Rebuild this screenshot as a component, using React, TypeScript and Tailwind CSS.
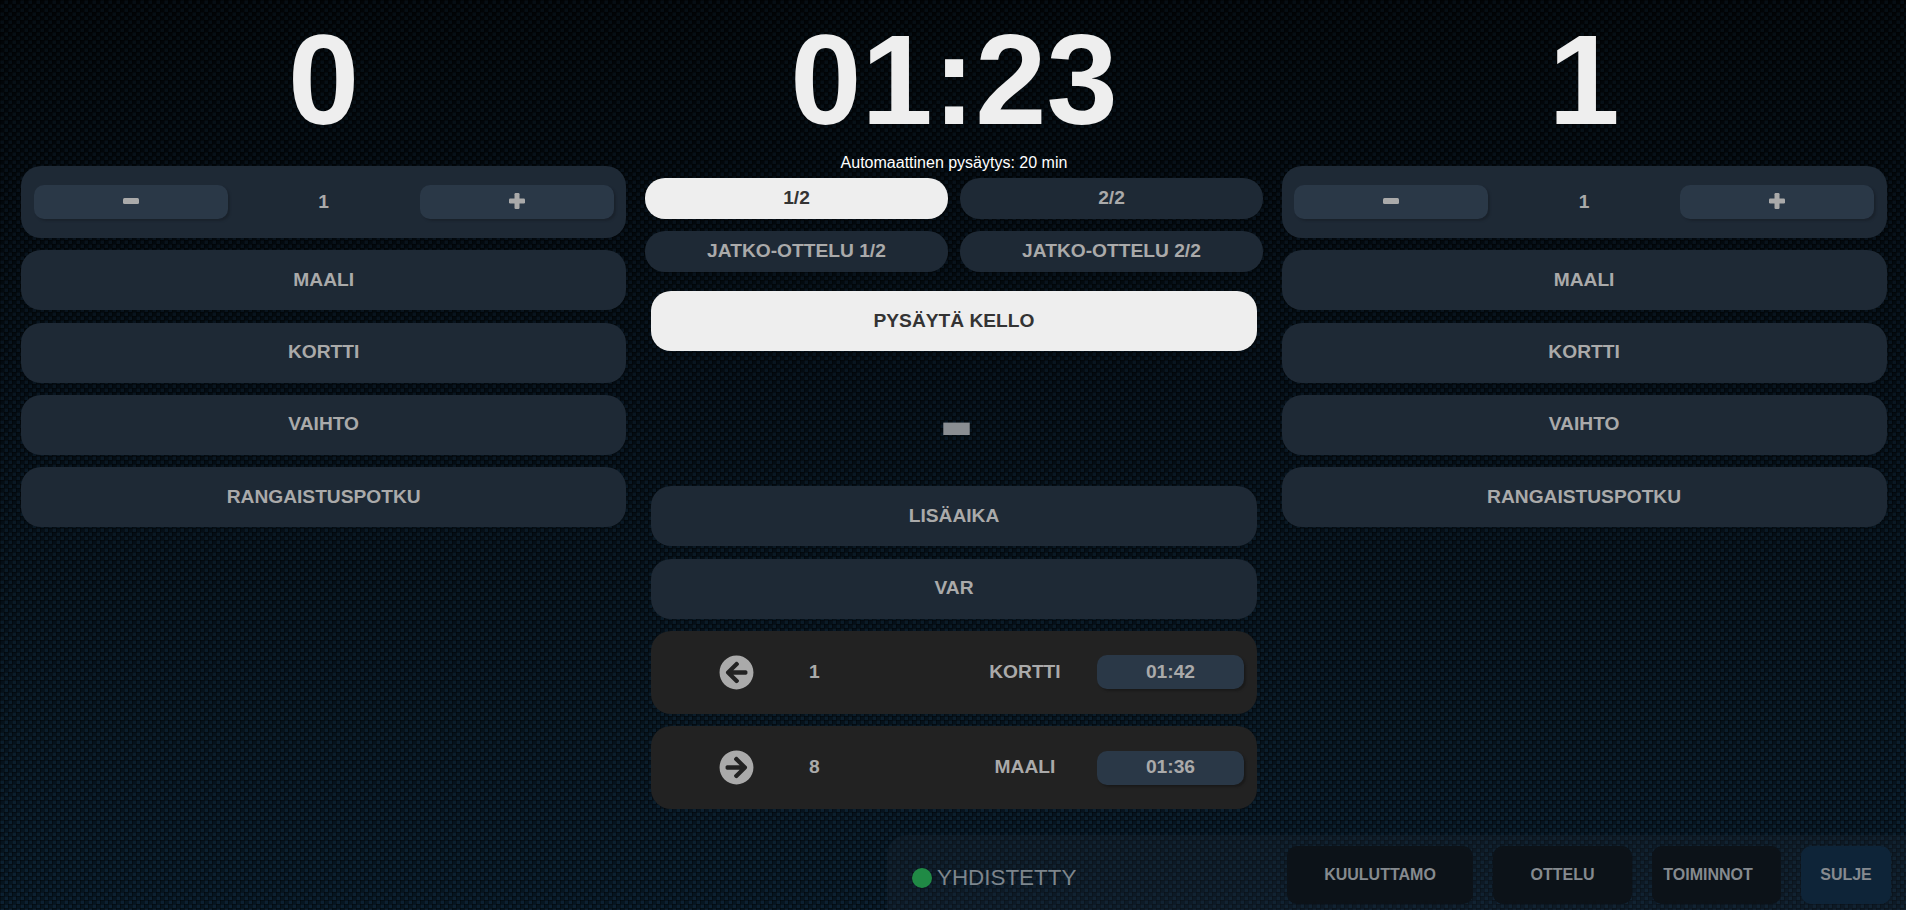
import { FaArrowCircleLeft, FaArrowCircleRight } from "react-icons/fa";

const actions = ["MAALI", "KORTTI", "VAIHTO", "RANGAISTUSPOTKU"];

const events = [
  { Icon: FaArrowCircleLeft, player: "1", label: "KORTTI", time: "01:42" },
  { Icon: FaArrowCircleRight, player: "8", label: "MAALI", time: "01:36" },
];

const panelBtn =
  "flex h-[60px] w-full shrink-0 items-center justify-center rounded-[20px] bg-[#1e2935] text-[19.2px] font-bold text-[#aaaaaa]";
const periodBtn =
  "flex h-[41px] items-center justify-center rounded-[20px] text-[19.2px] font-bold";
const stepBtn =
  "flex h-[34px] w-[194px] items-center justify-center rounded-[10px] bg-[#2a3847] text-[#aaaaaa] shadow-[2px_2px_2px_#1a222c]";

function MinusIcon() {
  return (
    <svg width="16" height="16" viewBox="0 0 16 16" className="mb-[3px]" fill="currentColor">
      <rect x="0" y="5" width="16" height="6" rx="1.5" />
    </svg>
  );
}

function PlusIcon() {
  return (
    <svg width="16" height="16" viewBox="0 0 16 16" className="mb-[2px]" fill="currentColor">
      <rect x="0" y="5.5" width="16" height="5" rx="1.2" />
      <rect x="5.5" y="0" width="5" height="16" rx="1.2" />
    </svg>
  );
}

function TeamColumn({ score }: { score: string }) {
  return (
    <div className="flex w-[605px] flex-col">
      <div className="flex h-[166px] justify-center pt-[6px] text-[128px] leading-[147px] font-bold text-[#eeeeee]">
        {score}
      </div>
      <div className="mb-[12.3px] flex h-[72px] items-center justify-between rounded-[20px] bg-[#1e2935] px-[12.5px]">
        <button className={stepBtn}>
          <MinusIcon />
        </button>
        <span className="text-[19.2px] font-bold text-[#aaaaaa]">1</span>
        <button className={stepBtn}>
          <PlusIcon />
        </button>
      </div>
      <div className="flex flex-col gap-[12.3px]">
        {actions.map((a) => (
          <button key={a} className={panelBtn}>
            {a}
          </button>
        ))}
      </div>
    </div>
  );
}

export default function App() {
  return (
    <div className="relative h-[910px] w-[1906px] overflow-hidden bg-[linear-gradient(#020508,#081a28)] font-['Liberation_Sans',Arial,sans-serif]">
      {/* carbon weave */}
      <div className="pointer-events-none absolute inset-0 bg-[linear-gradient(90deg,rgba(0,0,0,0.35)_1px,transparent_1px),linear-gradient(rgba(0,0,0,0.35)_1px,transparent_1px),conic-gradient(rgba(70,150,210,0.06)_25%,rgba(0,0,0,0.2)_0_50%,rgba(70,150,210,0.06)_0_75%,rgba(0,0,0,0.2)_0)] bg-[length:4px_4px,4px_4px,8px_8px]" />

      <div className="relative flex pl-[21.2px]">
        <TeamColumn score="0" />

        <div className="ml-[18.8px] flex w-[618px] flex-col">
          <div className="flex h-[147px] justify-center pt-[6px] text-[128px] leading-[147px] font-bold text-[#eeeeee]">
            01:23
          </div>
          <div className="flex h-[31px] items-center justify-center text-[16px] text-white">
            Automaattinen pysäytys: 20 min
          </div>
          <div className="grid grid-cols-[303px_303px] gap-x-3 gap-y-3">
            <button className={`${periodBtn} bg-[#eeeeee] text-[#333333]`}>1/2</button>
            <button className={`${periodBtn} bg-[#1e2935] text-[#aaaaaa]`}>2/2</button>
            <button className={`${periodBtn} bg-[#1e2935] text-[#aaaaaa]`}>JATKO-OTTELU 1/2</button>
            <button className={`${periodBtn} bg-[#1e2935] text-[#aaaaaa]`}>JATKO-OTTELU 2/2</button>
          </div>
          <div className="mt-[19px] flex flex-col items-center">
            <button className="flex h-[60px] w-[606px] items-center justify-center rounded-[20px] bg-[#eeeeee] text-[19.2px] font-bold text-[#333333]">
              PYSÄYTÄ KELLO
            </button>
            <div className="flex h-[135.3px] w-full items-center justify-center pt-[2px] pl-[5px] text-[104px] leading-none font-bold text-[#8b8e92]">
              -
            </div>
            <div className="flex w-[606px] flex-col gap-[12.3px]">
              <button className={panelBtn}>LISÄAIKA</button>
              <button className={panelBtn}>VAR</button>
              {events.map((e) => (
                <div
                  key={e.time}
                  className="grid h-[83px] grid-cols-[145px_144px_144px_147px] items-center rounded-[20px] bg-[#222222] px-[13px] text-[19.2px] font-bold text-[#aaaaaa]"
                >
                  <span className="flex justify-center">
                    <e.Icon size={35} />
                  </span>
                  <span>{e.player}</span>
                  <span className="text-center">{e.label}</span>
                  <span className="flex h-[34px] items-center justify-center rounded-[10px] bg-[#2a3847] shadow-[2px_2px_2px_#1a1a1a]">
                    {e.time}
                  </span>
                </div>
              ))}
            </div>
          </div>
        </div>

        <div className="ml-[18.6px]">
          <TeamColumn score="1" />
        </div>
      </div>

      {/* bottom bar */}
      <div className="absolute right-0 bottom-0 flex h-[75px] w-[1019px] items-start rounded-tl-[20px] bg-[#1e2935]/30 pt-[11px] pl-[25px]">
        <div className="mt-[22px] flex items-center">
          <span className="h-[20px] w-[20px] rounded-full bg-[#208a45]" />
          <span className="ml-[5px] text-[22.4px] leading-[20px] text-[#7d858c]">YHDISTETTY</span>
        </div>
        <div className="absolute top-[11px] right-[15px] flex gap-[20px] text-[16px] font-bold text-[#858a8f]">
          <button className="h-[58px] w-[186px] rounded-[10px] bg-[#0c1218]">KUULUTTAMO</button>
          <button className="h-[58px] w-[139px] rounded-[10px] bg-[#0c1218]">OTTELU</button>
          <button className="h-[58px] w-[129px] rounded-[10px] bg-[#0c1218] pr-[17px]">TOIMINNOT</button>
          <button className="h-[58px] w-[90px] rounded-[10px] bg-[#0e2438]">SULJE</button>
        </div>
      </div>
    </div>
  );
}
